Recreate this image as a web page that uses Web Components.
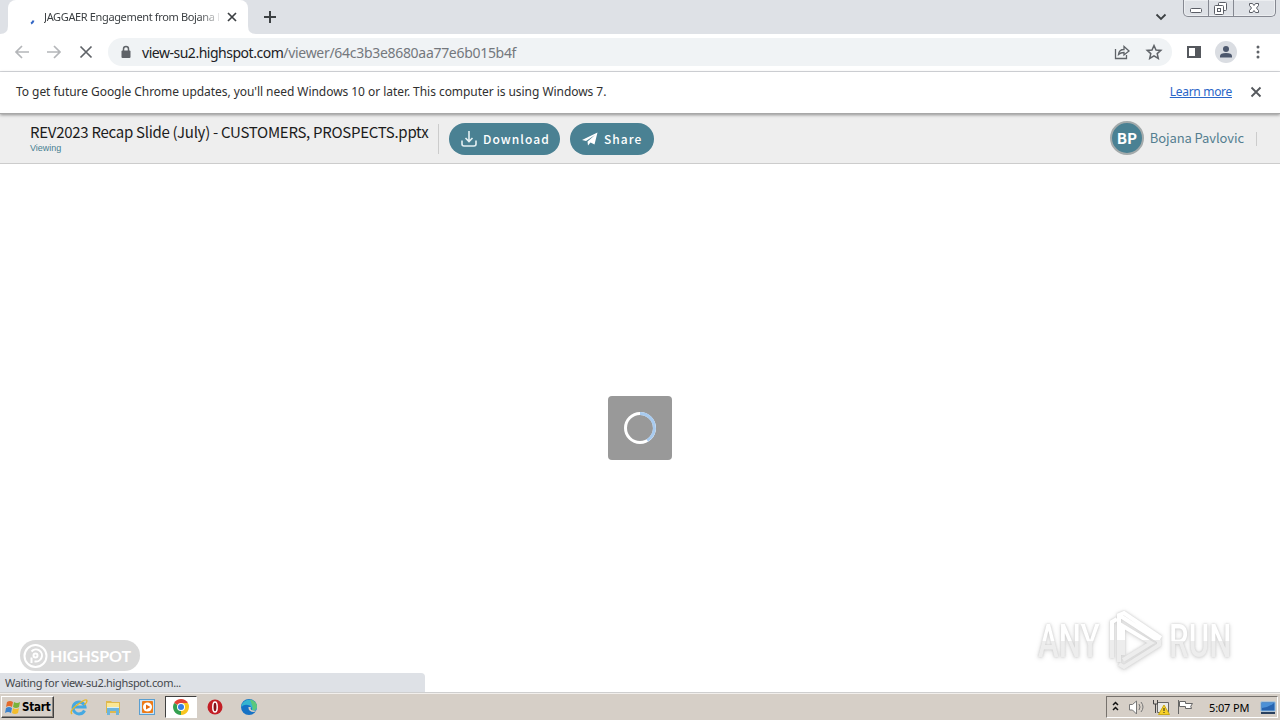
<!DOCTYPE html>
<html lang="en">
<head>
<meta charset="utf-8">
<title>JAGGAER Engagement from Bojana Pavlovic</title>
<style>
    html, body {
        margin: 0;
        height: 100%;
        overflow: hidden;
        background: #fff;
    }

    body {
        font-family: "Noto Sans", "Open Sans", sans-serif;
        font-size: 12px;
        color: #303030;
    }
</style>
</head>
<body>
<desktop-screen>
    <browser-tabs slot="browser">JAGGAER Engagement from Bojana Pavlovic</browser-tabs>
    <browser-toolbar slot="browser">view-su2.highspot.com<span slot="path">/viewer/64c3b3e8680aa77e6b015b4f</span></browser-toolbar>
    <info-bar slot="browser">To get future Google Chrome updates, you'll need Windows 10 or later. This computer is using Windows 7.<span slot="link">Learn more</span></info-bar>
    <viewer-header slot="browser">
        REV2023 Recap Slide (July) - CUSTOMERS, PROSPECTS.pptx
        <span slot="status">Viewing</span>
        <pill-button slot="actions" style="--width: 111px">
            <svg slot="icon" width="18" height="18" viewBox="0 0 18 18" fill="none" stroke="#e4f0f3" stroke-width="1.600"><path d="M9 1v10M5.500 8 9 11.500 12.500 8M2 10.500v3.500q0 2 2 2h10q2 0 2-2v-3.500"/></svg>
            Download
        </pill-button>
        <pill-button slot="actions" style="--width: 84px">
            <svg slot="icon" width="18" height="18" viewBox="0 0 18 18" fill="#fff"><path d="M1 10 16.500 2.500 13.500 14.500 9.500 12.500 7 15.500 6.500 11.500 14 5 5 11Z"/></svg>
            Share
        </pill-button>
        <span slot="user">Bojana Pavlovic</span>
    </viewer-header>
    <loading-box slot="page"></loading-box>
    <highspot-badge slot="page">HIGHSPOT</highspot-badge>
    <anyrun-mark slot="page"><span slot="left">ANY</span><span slot="right">RUN</span></anyrun-mark>
    <status-bubble slot="page">Waiting for view-su2.highspot.com...</status-bubble>
    <task-bar slot="taskbar">Start<span slot="clock">5:07 PM</span></task-bar>
</desktop-screen>

<script>
function define(name, template) {
    customElements.define(name, class extends HTMLElement {
        constructor() {
            super();
            this.attachShadow({ mode: "open" });
            this.shadowRoot.innerHTML = template;
        }
    });
}

define("desktop-screen", `
    <style>
        :host {
            display: flex;
            flex-direction: column;
            height: 720px;
            width: 1280px;
            overflow: hidden;
        }

        main {
            position: relative;
            flex: 1;
            display: flex;
            align-items: center;
            justify-content: center;
        }
    </style>
    <slot name="browser"></slot>
    <main><slot name="page"></slot></main>
    <slot name="taskbar"></slot>
`);

define("browser-tabs", `
    <style>
        :host {
            display: flex;
            height: 34px;
            background: #dee1e6;
            position: relative;
        }

        .tab {
            display: flex;
            align-items: center;
            box-sizing: border-box;
            width: 240px;
            margin-left: 8px;
            padding: 0 10px 0 17px;
            background: #fff;
            border-radius: 8px 8px 0 0;
        }

        .title {
            width: 175px;
            margin: -1px 8px 0 4px;
            font-size: 11px;
            letter-spacing: -0.36px;
            white-space: nowrap;
            overflow: hidden;
            color: #3c4043;
            -webkit-mask: linear-gradient(90deg, #000 155px, transparent 178px);
        }

        .tab svg {
            flex: none;
        }

        .feet {
            position: absolute;
            left: 0;
            bottom: 0;
        }

        .plus {
            margin: 9px 0 0 14px;
        }

        .down {
            margin: 12px 16px 0 auto;
        }

        .controls {
            display: flex;
            box-sizing: border-box;
            width: 93px;
            height: 17px;
            margin-right: 4px;
            border: 1px solid #858891;
            border-top: 0;
            border-radius: 0 0 5px 5px;
            box-shadow: inset 0 0 0 1px #eceef1;
        }
    </style>
    <svg class="feet" width="256" height="8"><path d="M0 8Q8 8 8 0V8ZM256 8Q248 8 248 0V8Z" fill="#fff"/></svg>
    <div class="tab">
        <svg width="15" height="16"><path d="M6 14.500Q8 13.500 8.500 11.500" fill="none" stroke="#3367c4" stroke-width="2"/></svg>
        <div class="title"><slot></slot></div>
        <svg width="10" height="10"><path d="m1 1 8 8M9 1 1 9" stroke="#3c4043" stroke-width="1.700"/></svg>
    </div>
    <svg class="plus" width="16" height="16"><path d="M8 2v12M2 8h12" stroke="#3c4043" stroke-width="2"/></svg>
    <svg class="down" width="12" height="10"><path d="m1.500 2.500 4.500 4.500 4.500-4.500" fill="none" stroke="#3c4043" stroke-width="1.800"/></svg>
    <div class="controls">
        <svg width="92" height="17" fill="#fff" stroke="#5b5e66">
            <path d="M24.500 0v16M49.500 0v16" stroke="#858891"/>
            <rect x="6.500" y="8.500" width="11" height="4" rx="1"/>
            <rect x="34.500" y="2.500" width="8" height="8" rx="1"/>
            <rect x="30.500" y="5.500" width="9" height="9" rx="1"/>
            <rect x="33.500" y="8.500" width="3" height="3"/>
            <path d="M65.500 3.500h3l1.500 2 1.500-2h3v2L72.500 8l2 2.500v2h-3l-1.500-2-1.500 2h-3v-2l2-2.500-2-2.500Z"/>
        </svg>
    </div>
`);

define("browser-toolbar", `
    <style>
        :host {
            display: flex;
            align-items: center;
            box-sizing: border-box;
            height: 38px;
            padding: 1px 11px 2px 13px;
            background: #fff;
            border-bottom: 1px solid #dadce0;
        }

        svg {
            flex: none;
        }

        .address {
            display: flex;
            align-items: center;
            box-sizing: border-box;
            width: 1064px;
            height: 28px;
            margin-left: 13px;
            padding: 0 9px 0 12px;
            border-radius: 14px;
            background: #f0f3f5;
            font-size: 14px;
            color: #202124;
        }

        .path {
            flex: 1;
            letter-spacing: -0.3px;
            color: #74787d;
        }

        .url {
            margin-left: 10px;
            letter-spacing: -0.48px;
        }
    </style>
    <svg width="82" height="18" fill="none" stroke="#b4b6b9" stroke-width="1.700">
        <path d="M16 9H3M9 3 3 9l6 6M34 9h13M41 3l6 6-6 6"/>
        <path d="m67.500 3.500 11 11M78.500 3.500l-11 11" stroke="#5f6368"/>
    </svg>
    <div class="address">
        <svg width="12" height="14"><path d="M3.500 6V4a2.500 2.500 0 0 1 5 0v2" fill="none" stroke="#5f6368" stroke-width="1.500"/><rect x="1.500" y="5.500" width="9" height="7.500" rx="1" fill="#5f6368"/></svg>
        <span class="url"><slot></slot></span><span class="path"><slot name="path"></slot></span>
        <svg width="50" height="18" fill="none" stroke="#5f6368" stroke-width="1.300">
            <path d="M2.500 6v9.500h11V12M5.500 11.500Q6 6.500 11 6.500V3.500l5 4.500-5 4V9.500Q7.500 9.500 5.500 11.500Z"/>
            <path d="m41 2.500 2 4.500 4.800.4-3.600 3.200 1.100 4.800-4.300-2.600-4.300 2.600 1.100-4.800L34.200 7.400 39 7Z" stroke-width="1.500"/>
        </svg>
    </div>
    <svg width="84" height="24">
        <path d="M16 7h12v10H16Z" fill="none" stroke="#55585d" stroke-width="2"/><path d="M23 6h6v12h-6Z" fill="#55585d"/>
        <circle cx="54" cy="12" r="11" fill="#dadde2"/>
        <circle cx="54" cy="9" r="3" fill="#4d586d"/><path d="M48 17.500v-1.500q0-3 6-3t6 3v1.500Z" fill="#4d586d"/>
    </svg>
    <svg width="4" height="16" fill="#5f6368"><circle cx="2" cy="3" r="1.500"/><circle cx="2" cy="8" r="1.500"/><circle cx="2" cy="13" r="1.500"/></svg>
`);

define("info-bar", `
    <style>
        :host {
            display: flex;
            align-items: center;
            box-sizing: border-box;
            height: 42px;
            padding: 0 18px 2px 16px;
            background: #fff;
            border-bottom: 1px solid #a8a8a8;
            font-size: 12px;
            letter-spacing: -0.05px;
            position: relative;
            box-shadow: 0 1px 3px #0006;
        }

        .link {
            margin-left: auto;
            letter-spacing: -0.3px;
            color: #2a66c8;
            text-decoration: underline;
        }

        svg {
            margin-left: 18px;
        }
    </style>
    <span><slot></slot></span>
    <span class="link"><slot name="link"></slot></span>
    <svg width="12" height="12"><path d="m1.500 1.500 9 9M10.500 1.500l-9 9" stroke="#55585d" stroke-width="1.800"/></svg>
`);

define("viewer-header", `
    <style>
        :host {
            display: flex;
            align-items: center;
            box-sizing: border-box;
            height: 50px;
            padding: 0 23px 0 30px;
            background: #eee;
            border-bottom: 1px solid #ccc;
            font-family: "Noto Sans CJK SC", sans-serif;
        }

        .names {
            display: flex;
            flex-direction: column;
            box-sizing: border-box;
            width: 409px;
            height: 30px;
            border-right: 1px solid #ccc;
        }

        .title {
            height: 19px;
            line-height: 15px;
            font-size: 15px;
            letter-spacing: -0.28px;
            color: #1c1c1c;
            white-space: nowrap;
        }

        .status {
            font: 9px/11px "Liberation Sans", sans-serif;
            color: #477f91;
        }

        .actions {
            display: flex;
            gap: 10px;
            margin-left: 10px;
        }

        .avatar {
            box-sizing: border-box;
            width: 34px;
            height: 34px;
            margin: -2px 0 0 auto;
            border: 2px solid #a3aaab;
            border-radius: 50%;
            background: #4a8193;
            color: #fff;
            font-size: 15px;
            font-weight: 700;
            line-height: 30px;
            text-align: center;
        }

        .user {
            margin-left: 6px;
            padding-right: 12px;
            font-size: 13px;
            letter-spacing: -0.1px;
            line-height: 12px;
            padding-bottom: 2px;
            color: #547e90;
            border-right: 1px solid #ccc;
        }
    </style>
    <div class="names">
        <div class="title"><slot></slot></div>
        <div class="status"><slot name="status"></slot></div>
    </div>
    <div class="actions"><slot name="actions"></slot></div>
    <div class="avatar">BP</div>
    <div class="user"><slot name="user"></slot></div>
`);

define("pill-button", `
    <style>
        :host {
            display: flex;
            align-items: center;
            box-sizing: border-box;
            width: var(--width);
            height: 32px;
            gap: 5px;
            padding-left: 11px;
            border-radius: 16px;
            background: #4a8193;
            color: #fff;
            font-size: 12px;
            font-weight: 500;
            letter-spacing: 1.05px;
            line-height: 20px;
        }
    </style>
    <slot name="icon"></slot>
    <span><slot></slot></span>
`);

define("loading-box", `
    <style>
        :host {
            display: flex;
            align-items: center;
            justify-content: center;
            width: 64px;
            height: 64px;
            border-radius: 4px;
            background: #999;
        }
    </style>
    <svg width="34" height="34" fill="none" stroke-width="3">
        <circle cx="17" cy="17" r="14.500" stroke="#fff"/>
        <path d="M17 2.500A14.500 14.500 0 0 1 24.300 29.500" stroke="#a8cbf0"/>
    </svg>
`);

define("highspot-badge", `
    <style>
        :host {
            position: absolute;
            left: 20px;
            bottom: 21px;
            display: flex;
            align-items: center;
            box-sizing: border-box;
            width: 120px;
            height: 31px;
            padding-left: 3px;
            gap: 2px;
            border-radius: 16px;
            background: #d9d9d9;
            color: #fff;
            font: bold 16px/30px Lato, sans-serif;
            letter-spacing: -0.1px;
        }
    </style>
    <svg width="25" height="26" fill="none" stroke="#fff" stroke-width="2">
        <circle cx="12.500" cy="13" r="11"/>
        <path d="M8.500 20v-5.500M8.500 8.500a6 6 0 1 1 3 9.800"/>
        <circle cx="12.500" cy="12.500" r="2"/>
    </svg>
    <span><slot></slot></span>
`);

define("anyrun-mark", `
    <style>
        :host {
            position: absolute;
            left: 1038px;
            bottom: 19px;
            display: flex;
            align-items: center;
            width: 196px;
            height: 64px;
            filter: drop-shadow(0 0 1px #ccc) drop-shadow(0 1px 2px #ddd);
            font: 500 46px/64px Roboto, sans-serif;
        }

        .word {
            display: block;
            width: 64px;
            white-space: nowrap;
        }

        .word span {
            display: inline-block;
            transform: scaleX(0.68);
            transform-origin: left;
            background: linear-gradient(#fff 50%, #ededed 50%);
            -webkit-background-clip: text;
            color: transparent;
        }

        svg {
            flex: none;
            margin: 0 4px 0 4px;
        }
    </style>
    <div class="word"><span><slot name="left"></slot></span></div>
    <svg width="59" height="64" fill="none" stroke="url(#fade)" stroke-width="4">
        <linearGradient id="fade" x2="0" y2="1"><stop offset=".5" stop-color="#fff"/><stop offset=".5" stop-color="#ededed"/></linearGradient>
        <path d="M6 49V13l5-3M13 53V6l5-2 37 25M13 6l40 26v4L18 58l-5-3M17 46V17l28 17-28 17"/>
    </svg>
    <div class="word"><span><slot name="right"></slot></span></div>
`);

define("status-bubble", `
    <style>
        :host {
            position: absolute;
            left: 0;
            bottom: 0;
            box-sizing: border-box;
            width: 425px;
            height: 19px;
            padding-left: 5px;
            background: #dee1e6;
            border-radius: 0 4px 0 0;
            font-size: 11px;
            letter-spacing: -0.33px;
            line-height: 20px;
            color: #45484c;
        }
    </style>
    <slot></slot>
`);

define("task-bar", `
    <style>
        :host {
            display: flex;
            align-items: center;
            box-sizing: border-box;
            height: 28px;
            padding: 1px 2px 0 1px;
            background: #d6cfc7;
            border-top: 1px solid #cfcfcf;
            box-shadow: inset 0 1px #f2efec;
            font-size: 11px;
            color: #000;
        }

        .start {
            display: flex;
            align-items: center;
            box-sizing: border-box;
            width: 53px;
            height: 22px;
            padding-left: 2px;
            border: 1px solid;
            border-color: #fff #404040 #404040 #fff;
            box-shadow: inset -1px -1px #8b8680;
            font: bold 11.5px "DejaVu Sans Condensed", sans-serif;
            letter-spacing: -0.2px;
        }

        .apps {
            display: flex;
            align-items: center;
            margin-left: 8px;
        }

        .apps div {
            display: flex;
            align-items: center;
            justify-content: center;
            box-sizing: border-box;
            width: 34px;
            height: 22px;
        }

        .apps .active {
            width: 32px;
            margin: 0 1px;
            background: #fff;
            border: 1px solid;
            border-color: #404040 #fff #fff #404040;
        }

        .tray {
            display: flex;
            align-items: center;
            box-sizing: border-box;
            width: 172px;
            height: 22px;
            margin-left: auto;
            border: 1px solid;
            border-color: #77726d #fff #fff #77726d;
        }

        .clock {
            width: 42px;
            margin: 0 9px 0 14px;
            letter-spacing: -0.15px;
            white-space: nowrap;
        }
    </style>
    <div class="start">
        <svg width="18" height="17">
            <path d="M3 3q3-2 6 0L8 8Q5 6 2 8Z" fill="#e36a2b"/><path d="M10 3q3 2 6 0l-1 5q-3 2-6 0Z" fill="#79b33a"/>
            <path d="M2 9q3-2 6 0l-1 5q-3-2-6 0Z" fill="#3c83cd"/><path d="M9 9q3 2 6 0l-1 5q-3 2-6 0Z" fill="#f3bd2c"/>
        </svg>
        <span><slot></slot></span>
    </div>
    <div class="apps">
        <div><svg width="18" height="18" fill="none">
            <path d="M14.500 12.500A6 6 0 1 1 15 9H4" stroke="#45a9e2" stroke-width="3"/>
            <path d="M2 16Q-1 13 7 7T16.500 2Q18 4 14 7" stroke="#e7b928" stroke-width="1.400"/>
        </svg></div>
        <div><svg width="18" height="18">
            <path d="M2 3h5l1 1h8v11H2Z" fill="#dfb94e"/><path d="M3 5h12v6H3Z" fill="#fbe795"/>
            <path d="M3 9h12v8h-3v-4H6v4H3Z" fill="#6db5dc"/><path d="M3 9h12v1H3Z" fill="#d8f0fa"/>
        </svg></div>
        <div><svg width="18" height="18">
            <rect x="1.500" y="1.500" width="15" height="15" fill="#c9e3f7" stroke="#5b9fd0"/><rect x="4" y="3" width="11" height="12" rx="1" fill="#ed7b18"/>
            <circle cx="9.500" cy="9" r="4.500" fill="#fff"/><path d="m8 6.500 4.500 2.500L8 11.500Z" fill="#e56b10"/>
        </svg></div>
        <div class="active"><svg width="16" height="16">
            <path d="M8 8 1.100 4A8 8 0 0 1 14.900 4Z" fill="#e24335"/><path d="M8 8 14.900 4A8 8 0 0 1 8 16Z" fill="#f8c51f"/><path d="M8 8v8A8 8 0 0 1 1.100 4Z" fill="#34a050"/>
            <path d="M8 4h6.900L16 8l-4.500 0Z" fill="#f8c51f"/><circle cx="8" cy="8" r="4" fill="#fff"/><circle cx="8" cy="8" r="3" fill="#347fe5"/>
        </svg></div>
        <div><svg width="16" height="16"><circle cx="8" cy="8" r="7.500" fill="#c31e25"/><ellipse cx="8" cy="8" rx="2.200" ry="5" fill="#861018" stroke="#fff" stroke-width="1.500"/></svg></div>
        <div><svg width="18" height="18">
            <circle cx="9" cy="9" r="8" fill="#1672c5"/><path d="M1.500 7A8 8 0 0 1 17 9q0 4-5 3.500 0-5-4-5.500-4-1-6.500 2Z" fill="#36b5d0"/>
            <path d="M10 1.500q7 1.500 7 7.500-.5 3.500-5 3.500 1-2 .5-4Z" fill="#5bc87b"/>
            <path d="M8.500 9q-.5 4.500 5.500 5l3-1.500q-3 .5-5.500-.5-1.500-1-.5-3Z" fill="#d6cfc7"/>
        </svg></div>
    </div>
    <div class="tray">
        <svg width="88" height="20" fill="none">
            <path d="m6 8 2.500-2.500L11 8M6 13l2.500-2.500L11 13" stroke="#111" stroke-width="1.500"/>
            <path d="M22.500 7.500h3L29.500 4v13l-4-4h-3Z" fill="#fff" stroke="#777"/><path d="M32 7q2 3 0 6M34 5q4 5 0 10" stroke="#777"/>
            <path d="M50.500 5.500h11v10h-11Z" fill="#e9e9e6" stroke="#666"/><path d="M46.500 3v4h4V3M48.500 7v9" stroke="#444"/>
            <path d="m57 8 5.500 9.500h-11Z" fill="#f8d126" stroke="#c9a916"/><path d="M57 11v3M57 15v1" stroke="#222"/>
            <path d="M71.500 3v14" stroke="#666"/><path d="M72.500 4.500h6v2h7q-3 3-1 5h-6v-2h-6Z" fill="#fff" stroke="#666"/>
        </svg>
        <span class="clock"><slot name="clock"></slot></span>
        <svg width="16" height="16"><path d="M1 3h14v9H1Z" fill="#2864b0" stroke="#87b9e3"/><path d="M2 9q7-1 12-5H2Z" fill="#4c91d7"/><path d="M1 14h14" stroke="#29405e" stroke-width="2"/></svg>
    </div>
`);
</script>
</body>
</html>
